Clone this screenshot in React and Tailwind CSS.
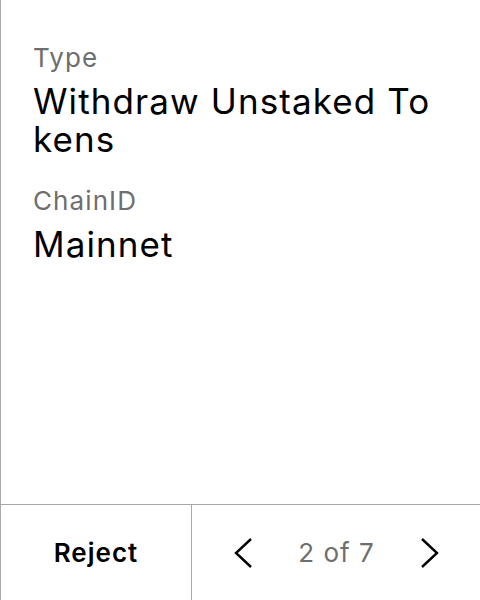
import React from "react";

export default function App() {
  return (
    <div
      className="w-[480px] h-[600px] bg-white flex flex-col border-l border-[#a8a8a8] overflow-hidden"
      style={{ fontFamily: "Inter, 'Noto Sans', sans-serif" }}
    >
      <div className="flex-1 flex flex-col pl-[32px] pr-[40px] pt-[40px]">
        <div className="text-[26px] leading-[36px] tracking-[1.1px] text-[#6e6e6e]">Type</div>
        <div className="text-[35px] leading-[38px] tracking-[1.1px] text-black break-all mt-[6px]">
          Withdraw Unstaked Tokens
        </div>
        <div className="text-[26px] leading-[36px] tracking-[1.1px] text-[#6e6e6e] mt-[25px]">ChainID</div>
        <div className="text-[35px] leading-[40px] tracking-[1.1px] text-black mt-[5px]">Mainnet</div>
      </div>
      <div className="h-[96px] border-t border-[#a8a8a8] flex">
        <div className="w-[191px] border-r border-[#a8a8a8] flex items-center justify-center">
          <span className="text-[26px] font-semibold tracking-[1px] text-black">Reject</span>
        </div>
        <div className="flex-1 flex items-center justify-between pl-[41px] pr-[40px]">
          <svg width="20" height="32" viewBox="0 0 20 32" fill="none">
            <path d="M18 2 L3 16 L18 30" stroke="black" strokeWidth="2.4" />
          </svg>
          <span className="text-[26px] tracking-[1px] text-[#6e6e6e]">2 of 7</span>
          <svg width="20" height="32" viewBox="0 0 20 32" fill="none">
            <path d="M2 2 L17 16 L2 30" stroke="black" strokeWidth="2.4" />
          </svg>
        </div>
      </div>
    </div>
  );
}
